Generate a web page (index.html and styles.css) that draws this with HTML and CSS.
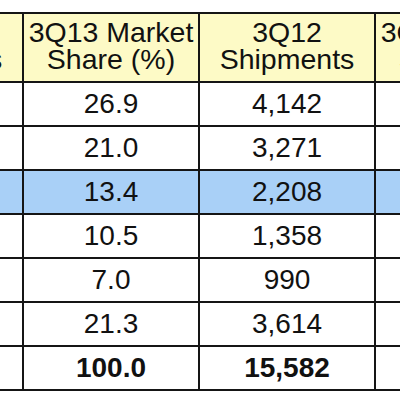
FILE: index.html
```html
<!DOCTYPE html>
<html lang="en">
<head>
    <meta charset="UTF-8">
    <meta name="viewport" content="width=device-width, initial-scale=1.0">
    <title>Smartphone Vendors</title>
    <link rel="stylesheet" href="styles.css">
</head>
<body>
    <div class="sheet">
        <table class="shares">
            <tr class="head">
                <td>3Q13<br>Shipments</td>
                <td>3Q13 Market<br>Share (%)</td>
                <td>3Q12<br>Shipments</td>
                <td>3Q12 Market<br>Share (%)</td>
            </tr>
            <tr>
                <td>81,200</td>
                <td>26.9</td>
                <td>4,142</td>
                <td>26.6</td>
            </tr>
            <tr>
                <td>63,500</td>
                <td>21.0</td>
                <td>3,271</td>
                <td>21.0</td>
            </tr>
            <tr class="mark">
                <td>40,500</td>
                <td>13.4</td>
                <td>2,208</td>
                <td>14.2</td>
            </tr>
            <tr>
                <td>31,800</td>
                <td>10.5</td>
                <td>1,358</td>
                <td>8.7</td>
            </tr>
            <tr>
                <td>21,100</td>
                <td>7.0</td>
                <td>990</td>
                <td>6.4</td>
            </tr>
            <tr>
                <td>64,300</td>
                <td>21.3</td>
                <td>3,614</td>
                <td>23.2</td>
            </tr>
            <tr class="total">
                <td>302,400</td>
                <td>100.0</td>
                <td>15,582</td>
                <td>100.0</td>
            </tr>
        </table>
    </div>
</body>
</html>
```

FILE: styles.css
```css
* {
    margin: 0;
    padding: 0;
    box-sizing: border-box;
}

body {
    background: #ffffff;
    color: #111111;
    font-family: 'Liberation Sans', Arial, sans-serif;
    overflow: hidden;
    width: 400px;
    height: 400px;
}

.sheet {
    padding-top: 12px;
    width: 400px;
    overflow: hidden;
}

.shares {
    margin-left: -152px;
    border-collapse: separate;
    border-spacing: 0;
    border-top: 2px solid #151515;
    table-layout: fixed;
    width: 704px;
}

.shares td {
    width: 176px;
    height: 44px;
    border-right: 2px solid #151515;
    border-bottom: 2px solid #151515;
    text-align: center;
    vertical-align: middle;
    font-size: 28px;
    line-height: 28px;
    white-space: nowrap;
    overflow: hidden;
}

.shares .head td {
    height: 69px;
    background: #fdfac6;
    line-height: 27px;
    font-size: 28.5px;
    padding-bottom: 4px;
}

.shares .mark td {
    background: #a9d0f7;
}

.shares .total td {
    font-weight: bold;
}
```
